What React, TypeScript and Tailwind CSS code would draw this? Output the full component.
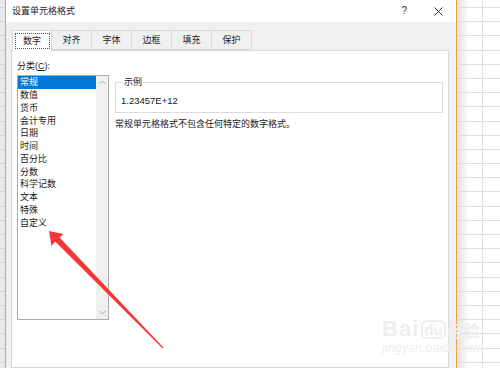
const categories = [
  "常规",
  "数值",
  "货币",
  "会计专用",
  "日期",
  "时间",
  "百分比",
  "分数",
  "科学记数",
  "文本",
  "特殊",
  "自定义",
];

const tabs = ["数字", "对齐", "字体", "边框", "填充", "保护"];

const rows = Array.from({ length: 26 });

export default function App() {
  return (
    <div className="relative flex w-[500px] h-[368px] overflow-hidden bg-white font-['Liberation_Sans','Noto_Sans_CJK_SC',sans-serif] text-[9px] leading-[12px] text-[#1a1a1a]">
      {/* sheet behind, left */}
      <div className="w-[5px] h-full bg-[#e9e9e9] flex flex-col pt-[7px]">
        {rows.map((_, i) => (
          <div key={i} className="h-[14.2px] shrink-0 border-t border-[#d4d4d4]" />
        ))}
      </div>
      <div className="w-[1px] h-full bg-[#e8a048]" />

      {/* dialog */}
      <div className="w-[450px] h-full flex flex-col">
        <div className="h-[22px] bg-white flex items-center pl-[6px] shrink-0">
          <span className="flex-1">设置单元格格式</span>
          <span className="text-[10px] text-[#333] mr-[27px]">?</span>
          <svg width="9" height="9" viewBox="0 0 9 9" className="mr-[13px]">
            <path d="M0.5 0.5 L8.5 8.5 M8.5 0.5 L0.5 8.5" stroke="#333" strokeWidth="1" />
          </svg>
        </div>

        <div className="flex-1 bg-[#f0f0f0] pl-[5px] pr-[7px] pt-[8px] flex flex-col">
          <div className="flex ml-[1px] h-[20px] relative z-10">
            {tabs.map((t, i) =>
              i === 0 ? (
                <div
                  key={t}
                  className="w-[40px] h-[21px] bg-white border border-b-0 border-[#d9d9d9] flex items-center justify-center"
                >
                  <div className="w-[35px] h-[16px] border border-dotted border-[#555] flex items-center justify-center">
                    {t}
                  </div>
                </div>
              ) : (
                <div
                  key={t}
                  className="w-[40px] h-[20px] bg-[#f0f0f0] border border-l-0 border-[#d9d9d9] flex items-center justify-center"
                >
                  {t}
                </div>
              )
            )}
          </div>

          <div className="flex-1 bg-white border border-[#d9d9d9] pl-[5px] pr-[5px] pt-[9px] flex">
            <div className="w-[92px] flex flex-col">
              <div className="h-[12px] mb-[3px]">
                分类(<span className="underline">C</span>):
              </div>
              <div className="h-[245px] border border-[#ababab] flex">
                <div className="flex-1 flex flex-col">
                  {categories.map((c, i) => (
                    <div
                      key={c}
                      className={
                        i === 0
                          ? "h-[12.75px] shrink-0 pl-[2px] flex items-center bg-[#0078d7] text-white"
                          : "h-[12.75px] shrink-0 pl-[2px] flex items-center"
                      }
                    >
                      {c}
                    </div>
                  ))}
                </div>
                <div className="w-[12px] bg-[#f0f0f0] flex flex-col items-center justify-between py-[4px]">
                  <svg width="7" height="5" viewBox="0 0 7 5">
                    <path d="M0.5 4 L3.5 1 L6.5 4" fill="none" stroke="#a6a6a6" strokeWidth="1" />
                  </svg>
                  <svg width="7" height="5" viewBox="0 0 7 5">
                    <path d="M0.5 1 L3.5 4 L6.5 1" fill="none" stroke="#a6a6a6" strokeWidth="1" />
                  </svg>
                </div>
              </div>
            </div>

            <div className="flex-1 ml-[6px] pt-[16px] flex flex-col">
              <fieldset className="border border-[#dcdcdc] pl-[5px] pt-[7px] pb-[5px]">
                <legend className="ml-[2px] px-[1px]">示例</legend>
                <div className="text-[9.5px]">1.23457E+12</div>
              </fieldset>
              <div className="mt-[5px]">常规单元格格式不包含任何特定的数字格式。</div>
            </div>
          </div>
        </div>
      </div>

      <div className="w-[1px] h-full bg-[#e8a048]" />

      {/* sheet behind, right */}
      <div className="flex-1 h-full relative flex">
        <div className="w-[26px] h-full border-r border-[#dedede] bg-gradient-to-r from-[#e2e2e2] via-white to-white flex flex-col pt-[7px]">
          {rows.map((_, i) => (
            <div key={i} className="h-[14.2px] shrink-0 border-t border-[#dedede]" />
          ))}
        </div>
        <div className="flex-1 h-full flex flex-col pt-[7px]">
          {rows.map((_, i) => (
            <div key={i} className="h-[14.2px] shrink-0 border-t border-[#dedede]" />
          ))}
        </div>
      </div>

      {/* red arrow annotation */}
      <svg className="absolute inset-0 pointer-events-none" width="500" height="368" viewBox="0 0 500 368">
        <polygon
          points="49,231 63.5,234 59.6,237.6 163.4,347.6 162.6,348.4 55.2,241.6 51.5,246"
          fill="#f73636"
        />
      </svg>

      {/* watermark */}
      <div className="absolute left-[382px] top-[318px] flex flex-col items-start text-[#eeeeee] pointer-events-none">
        <div className="flex items-end font-bold leading-none">
          <span className="text-[22px] tracking-[1px]">Bai</span>
          <span className="text-[15px] border-[2px] border-[#eeeeee] rounded-[6px] px-[1px] mx-[2px] mb-[1px]">du</span>
          <span className="text-[16px]">经验</span>
        </div>
        <div className="text-[12px] leading-[16px] tracking-[0.3px] italic">jingyan.baidu.com</div>
      </div>
    </div>
  );
}
